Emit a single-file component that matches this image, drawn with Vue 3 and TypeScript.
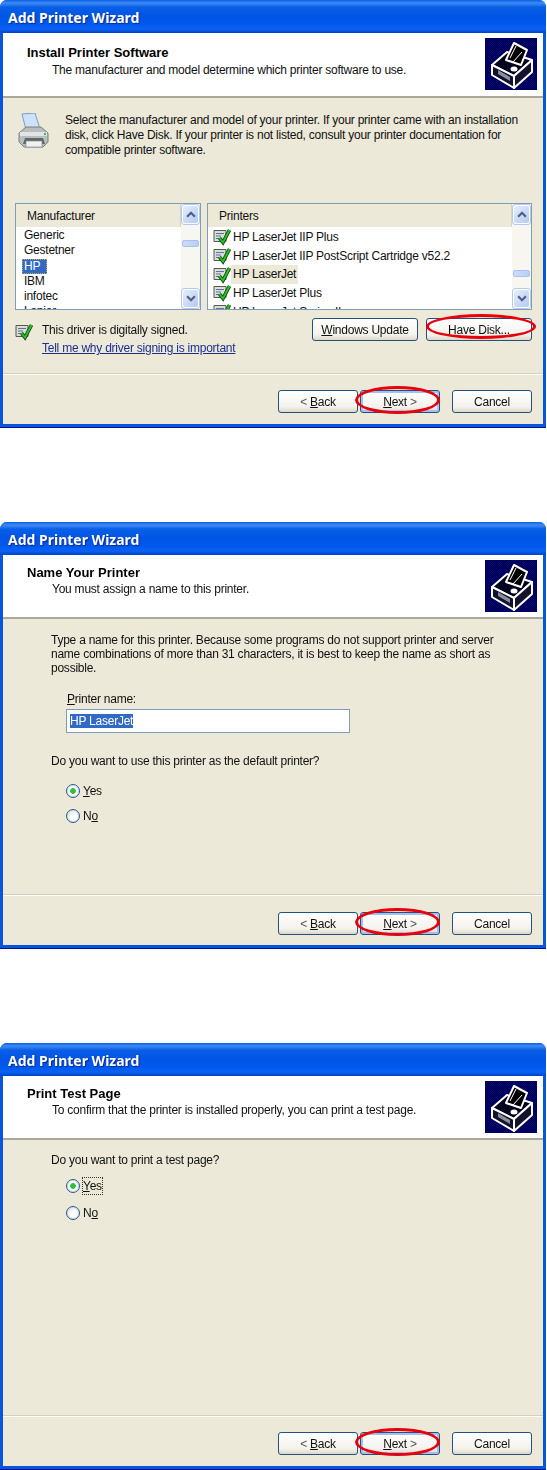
<template>
  <div class="page">
    <section v-for="w in wizards" :key="w.id" class="window" :class="`window-${w.id}`">
      <div class="titlebar">Add Printer Wizard</div>
      <div class="inner">
        <header class="head">
          <div class="head-text">
            <h1>{{ w.heading }}</h1>
            <p>{{ w.sub }}</p>
          </div>
          <svg class="wizard-icon" viewBox="0 0 52 52" aria-hidden="true">
            <defs>
              <pattern :id="`dither-${w.id}`" width="2" height="2" patternUnits="userSpaceOnUse">
                <rect width="2" height="2" fill="#000088" />
                <rect width="1" height="1" fill="#000038" />
                <rect x="1" y="1" width="1" height="1" fill="#000038" />
              </pattern>
            </defs>
            <rect width="52" height="52" :fill="`url(#dither-${w.id})`" />
            <g stroke="#fff" stroke-width="2" stroke-linejoin="round">
              <path d="M7 27 22 14 47 22 29 38Z" fill="#050520" />
              <path d="M7 27 29 38V50L7 37Z" fill="#12122c" />
              <path d="M29 38 47 22V34L29 50Z" fill="#12122c" />
              <path d="M21 22 29 5 42 12 36 27Z" fill="#000" />
            </g>
            <path d="M25 20 31 8M28 24 37 14" stroke="#fff" stroke-width="1" />
            <path d="M13 32 25 39V43L13 36Z" fill="#8d8da0" />
            <ellipse cx="29" cy="31" rx="3.500" ry="2.500" fill="#fff" />
          </svg>
        </header>

        <main class="body">
          <template v-if="w.id === 1">
            <div class="intro">
              <svg class="printer-icon" viewBox="0 0 32 36" aria-hidden="true">
                <path d="M5 1 18 0 23 16 9 17Z" fill="#cfe2fb" stroke="#7c9ac4" />
                <path d="M2 20 9 14H24L31 20V29L26 34H7L2 29Z" fill="#b9bdbf" stroke="#77807f" />
                <path d="M3 19H30V23H3Z" fill="#e2e4e4" />
                <path d="M8 25H26L28 31H6Z" fill="#5e6866" />
                <path d="M9 28H25V34H9Z" fill="#f0f1f0" stroke="#8a9190" stroke-width=".7" />
                <circle cx="28" cy="21" r="1.200" fill="#3fc04a" />
              </svg>
              <p>
                Select the manufacturer and model of your printer. If your printer came with an installation
                disk, click Have Disk. If your printer is not listed, consult your printer documentation for
                compatible printer software.
              </p>
            </div>

            <div class="lists">
              <div class="listbox maker">
                <div class="list-main">
                  <div class="list-head">Manufacturer</div>
                  <ul class="rows">
                    <li v-for="m in makers" :key="m" class="maker-row">
                      <span :class="{ picked: m === 'HP' }">{{ m }}</span>
                    </li>
                  </ul>
                </div>
                <div class="scrollbar">
                  <span class="sb-btn"><svg viewBox="0 0 9 6"><path d="M1 5 4.500 1.500 8 5" /></svg></span>
                  <span class="sb-track"><i class="thumb" style="margin-top: 16px" /></span>
                  <span class="sb-btn"><svg viewBox="0 0 9 6"><path d="M1 1 4.500 4.500 8 1" /></svg></span>
                </div>
              </div>
              <div class="listbox models">
                <div class="list-main">
                  <div class="list-head">Printers</div>
                  <ul class="rows">
                    <li v-for="p in printers" :key="p" class="model-row">
                      <svg class="cert" viewBox="0 0 18 18" aria-hidden="true">
                        <path d="M1 2.500H13V13.500H1Z" fill="#dcdccf" stroke="#55594e" />
                        <path d="M3 5.500H11M3 8H8M3 10.500H7" stroke="#5472b8" stroke-width="1.200" />
                        <path d="M6.500 10 10 14.500 16.500 2" fill="none" stroke="#123c14" stroke-width="3.600" />
                        <path d="M6.500 10 10 14.500 16.500 2" fill="none" stroke="#25c425" stroke-width="2" />
                      </svg>
                      <span :class="{ soft: p === 'HP LaserJet' }">{{ p }}</span>
                    </li>
                  </ul>
                </div>
                <div class="scrollbar">
                  <span class="sb-btn"><svg viewBox="0 0 9 6"><path d="M1 5 4.500 1.500 8 5" /></svg></span>
                  <span class="sb-track"><i class="thumb" style="margin-top: 46px" /></span>
                  <span class="sb-btn"><svg viewBox="0 0 9 6"><path d="M1 1 4.500 4.500 8 1" /></svg></span>
                </div>
              </div>
            </div>

            <div class="signed">
              <svg class="cert signed-icon" viewBox="0 0 18 18" aria-hidden="true">
                <path d="M1 2.500H13V13.500H1Z" fill="#dcdccf" stroke="#55594e" />
                <path d="M3 5.500H11M3 8H8M3 10.500H7" stroke="#5472b8" stroke-width="1.200" />
                <path d="M6.500 10 10 14.500 16.500 2" fill="none" stroke="#123c14" stroke-width="3.600" />
                <path d="M6.500 10 10 14.500 16.500 2" fill="none" stroke="#25c425" stroke-width="2" />
              </svg>
              <div class="signed-text">
                <span>This driver is digitally signed.</span>
                <a href="#">Tell me why driver signing is important</a>
              </div>
              <div class="signed-btns">
                <button class="btn wide"><u>W</u>indows Update</button>
                <button class="btn wide">
                  <u>H</u>ave Disk...
                  <span class="ring ring-disk" />
                </button>
              </div>
            </div>
          </template>

          <template v-else-if="w.id === 2">
            <div class="indent">
              <p class="lead">
                Type a name for this printer. Because some programs do not support printer and server<br />
                name combinations of more than 31 characters, it is best to keep the name as short as<br />
                possible.
              </p>
              <label class="name-label"><u>P</u>rinter name:</label>
              <div class="name-input"><span class="selected">HP LaserJet</span></div>
              <p class="question">Do you want to use this printer as the default printer?</p>
              <div class="radios radios-2">
                <div class="radio-row"><span class="radio on" /><span><u>Y</u>es</span></div>
                <div class="radio-row"><span class="radio" /><span>N<u>o</u></span></div>
              </div>
            </div>
          </template>

          <template v-else>
            <div class="indent">
              <p class="question first">Do you want to print a test page?</p>
              <div class="radios radios-3">
                <div class="radio-row"><span class="radio on" /><span class="focus"><u>Y</u>es</span></div>
                <div class="radio-row"><span class="radio" /><span>N<u>o</u></span></div>
              </div>
            </div>
          </template>
        </main>

        <footer class="foot">
          <button class="btn"><span class="chev">&lt;</span> <u>B</u>ack</button>
          <button class="btn default">
            <u>N</u>ext <span class="chev">&gt;</span>
            <span class="ring ring-next" />
          </button>
          <button class="btn cancel">Cancel</button>
        </footer>
      </div>
    </section>
  </div>
</template>

<script setup lang="ts">
interface Wizard {
  id: number
  heading: string
  sub: string
}

const wizards: Wizard[] = [
  {
    id: 1,
    heading: "Install Printer Software",
    sub: "The manufacturer and model determine which printer software to use.",
  },
  {
    id: 2,
    heading: "Name Your Printer",
    sub: "You must assign a name to this printer.",
  },
  {
    id: 3,
    heading: "Print Test Page",
    sub: "To confirm that the printer is installed properly, you can print a test page.",
  },
]

const makers = ["Generic", "Gestetner", "HP", "IBM", "infotec", "Lanier"]

const printers = [
  "HP LaserJet IIP Plus",
  "HP LaserJet IIP PostScript Cartridge v52.2",
  "HP LaserJet",
  "HP LaserJet Plus",
  "HP LaserJet Series II",
]
</script>

<style>
html,
body {
  background: #fff;
}
</style>

<style scoped>
.page {
  width: 547px;
  height: 1470px;
  display: flex;
  flex-direction: column;
  gap: 94px;
  overflow: hidden;
  font-family: "Liberation Sans", Arial, sans-serif;
  font-size: 12px;
  letter-spacing: -0.24px;
  color: #111;
  filter: blur(0.35px);
}

.window {
  width: 546px;
  height: 427px;
  flex: none;
  display: flex;
  flex-direction: column;
  box-sizing: border-box;
  border-radius: 7px 7px 0 0;
  background: #0a55de;
  padding: 0 3px 3px;
  border-bottom: 1px solid #00138c;
}

.window-1 {
  height: 428px;
}

.titlebar {
  height: 33px;
  flex: none;
  margin: 0 -3px;
  padding-left: 8px;
  box-sizing: border-box;
  border-radius: 7px 7px 0 0;
  line-height: 36px;
  color: #fff;
  font-family: "Noto Sans", "Liberation Sans", sans-serif;
  font-size: 14px;
  font-weight: 700;
  letter-spacing: 0;
  text-shadow: 1px 1px 1px #0a2a90;
  background: linear-gradient(
    #0a5fe8 0,
    #3f8cf3 3px,
    #0a5fe6 7px,
    #0055e5 16px,
    #0058ee 24px,
    #0a62f4 29px,
    #0044c8 33px
  );
}

.inner {
  flex: 1;
  display: flex;
  flex-direction: column;
  min-height: 0;
  background: #ece9d8;
}

.head {
  height: 64px;
  flex: none;
  box-sizing: border-box;
  display: flex;
  justify-content: space-between;
  background: #fff;
  border-bottom: 2px solid #aca899;
  padding: 5px 6px 0 24px;
}

.window-1 .head {
  height: 65px;
}

h1 {
  margin: 5px 0 0;
  font-size: 13px;
  line-height: 15px;
  font-weight: 700;
  letter-spacing: 0;
  color: #000;
}

.window-1 h1 {
  margin-top: 7px;
}

.head p {
  margin: 2px 0 0 25px;
  line-height: 15px;
}

.window-1 .head p {
  margin-top: 3px;
}

.wizard-icon {
  width: 52px;
  height: 52px;
  flex: none;
}

.body {
  flex: 1;
  min-height: 0;
}

.intro {
  height: 105px;
  box-sizing: border-box;
  display: flex;
  gap: 16px;
  padding: 15px 11px 0 14px;
}

.intro p {
  margin: 0;
  line-height: 15px;
}

.printer-icon {
  width: 32px;
  height: 36px;
  flex: none;
}

.lists {
  display: flex;
  gap: 6px;
  padding: 0 11px 0 12px;
}

.listbox {
  height: 107px;
  box-sizing: border-box;
  display: flex;
  border: 1px solid #7f9db9;
  background: #fff;
}

.maker {
  width: 186px;
  flex: none;
}

.models {
  flex: 1;
}

.list-main {
  flex: 1;
  min-width: 0;
  display: flex;
  flex-direction: column;
}

.list-head {
  height: 23px;
  flex: none;
  box-sizing: border-box;
  background: #ece9d8;
  border-right: 1px solid #d8d4c2;
  line-height: 25px;
  padding-left: 11px;
}

.rows {
  list-style: none;
  margin: 0;
  padding: 1px 0 0;
  overflow: hidden;
  flex: 1;
}

.maker-row {
  height: 15.300px;
  line-height: 15.300px;
  padding-left: 6px;
}

.maker-row span {
  padding-left: 2px;
}

.maker-row .picked {
  display: inline-block;
  padding: 0 7px 0 2px;
  background: #316ac5;
  color: #fff;
  outline: 1px dotted #c9a85c;
  outline-offset: -1px;
}

.model-row {
  height: 18.700px;
  display: flex;
  align-items: center;
  padding-left: 5px;
}

.cert {
  width: 18px;
  height: 18px;
  flex: none;
}

.model-row span {
  padding: 0 2px;
}

.model-row .soft {
  background: #ece9d8;
  line-height: 19px;
}

.scrollbar {
  width: 19px;
  flex: none;
  display: flex;
  flex-direction: column;
  padding: 1px 0;
  box-sizing: border-box;
  background: #f7f6f1;
}

.sb-btn {
  height: 19px;
  flex: none;
  display: flex;
  align-items: center;
  justify-content: center;
  box-sizing: border-box;
  margin: 0 1px;
  border: 1px solid #fff;
  border-radius: 3px;
  background: linear-gradient(135deg, #e6eefc, #b4c9f2);
  box-shadow: 0 0 0 1px #b5c8ee;
}

.sb-btn svg {
  width: 10px;
  height: 7px;
}

.sb-btn path {
  fill: none;
  stroke: #4d6185;
  stroke-width: 2;
}

.sb-track {
  flex: 1;
}

.thumb {
  display: block;
  height: 7px;
  margin: 0 1px;
  border-radius: 2px;
  background: linear-gradient(90deg, #cfdcf8, #b9cdf5);
  border: 1px solid #a9bfee;
  box-sizing: border-box;
}

.signed {
  display: flex;
  align-items: flex-start;
  padding: 8px 11px 0 12px;
}

.signed-icon {
  margin: 5px 9px 0 0;
}

.signed-text {
  flex: 1;
  display: flex;
  flex-direction: column;
  padding-top: 4px;
  line-height: 16px;
  gap: 2px;
}

.signed-text a {
  color: #1c2f90;
  text-decoration: underline;
}

.signed-btns {
  display: flex;
  gap: 8px;
}

.btn {
  position: relative;
  width: 80px;
  height: 23px;
  padding: 0;
  box-sizing: border-box;
  border: 1px solid #24517f;
  border-radius: 3px;
  background: linear-gradient(#fff, #f3f2ec 75%, #dcd8c9);
  color: #111;
  font: inherit;
  letter-spacing: inherit;
}

.btn.wide {
  width: 106px;
}

.btn.default {
  box-shadow: inset 0 0 0 2px #a6bdef;
}

.chev {
  color: #555;
}

.ring {
  position: absolute;
  box-sizing: border-box;
  border: 3px solid #e8000d;
  border-radius: 50%;
  pointer-events: none;
}

.ring-disk {
  left: -1px;
  top: -5px;
  width: 110px;
  height: 25px;
}

.ring-next {
  left: -6px;
  top: -5px;
  width: 85px;
  height: 28px;
}

.foot {
  height: 51px;
  flex: none;
  box-sizing: border-box;
  display: flex;
  justify-content: flex-end;
  gap: 2px;
  padding: 16px 11px 0 0;
  border-top: 1px solid #d2cfbe;
  box-shadow: inset 0 1px 0 #fff;
}

.window-2 .foot {
  padding-top: 17px;
}

.cancel {
  margin-left: 10px;
}

.indent {
  padding: 14px 11px 0 48px;
}

.lead {
  margin: 0;
  line-height: 14px;
}

.name-label {
  display: block;
  margin: 17px 0 0 16px;
  line-height: 14px;
}

.name-input {
  width: 284px;
  height: 24px;
  margin: 3px 0 0 15px;
  padding: 4px 3px;
  box-sizing: border-box;
  border: 1px solid #7f9db9;
  background: #fff;
  line-height: 14px;
}

.selected {
  display: inline-block;
  background: #316ac5;
  color: #fff;
}

.question {
  margin: 21px 0 0;
  line-height: 14px;
}

.question.first {
  margin-top: -1px;
}

.radios {
  margin-left: 15px;
  display: flex;
  flex-direction: column;
}

.radios-2 {
  margin-top: 15px;
  gap: 9px;
}

.radios-3 {
  margin-top: 11px;
  gap: 11px;
}

.radio-row {
  height: 16px;
  display: flex;
  align-items: center;
  gap: 3px;
  line-height: 16px;
}

.radio {
  width: 14px;
  height: 14px;
  flex: none;
  box-sizing: border-box;
  border: 1px solid #2c5a85;
  border-radius: 50%;
  background: radial-gradient(circle at 65% 65%, #fff 30%, #d9d7cb 100%);
  box-shadow: inset 0 0 0 1px #cfe0f2;
}

.radio.on {
  background: radial-gradient(circle, #2ec23c 0 2.500px, #fff 3.200px);
}

.focus {
  outline: 1px dotted #333;
  outline-offset: 0;
}
</style>
